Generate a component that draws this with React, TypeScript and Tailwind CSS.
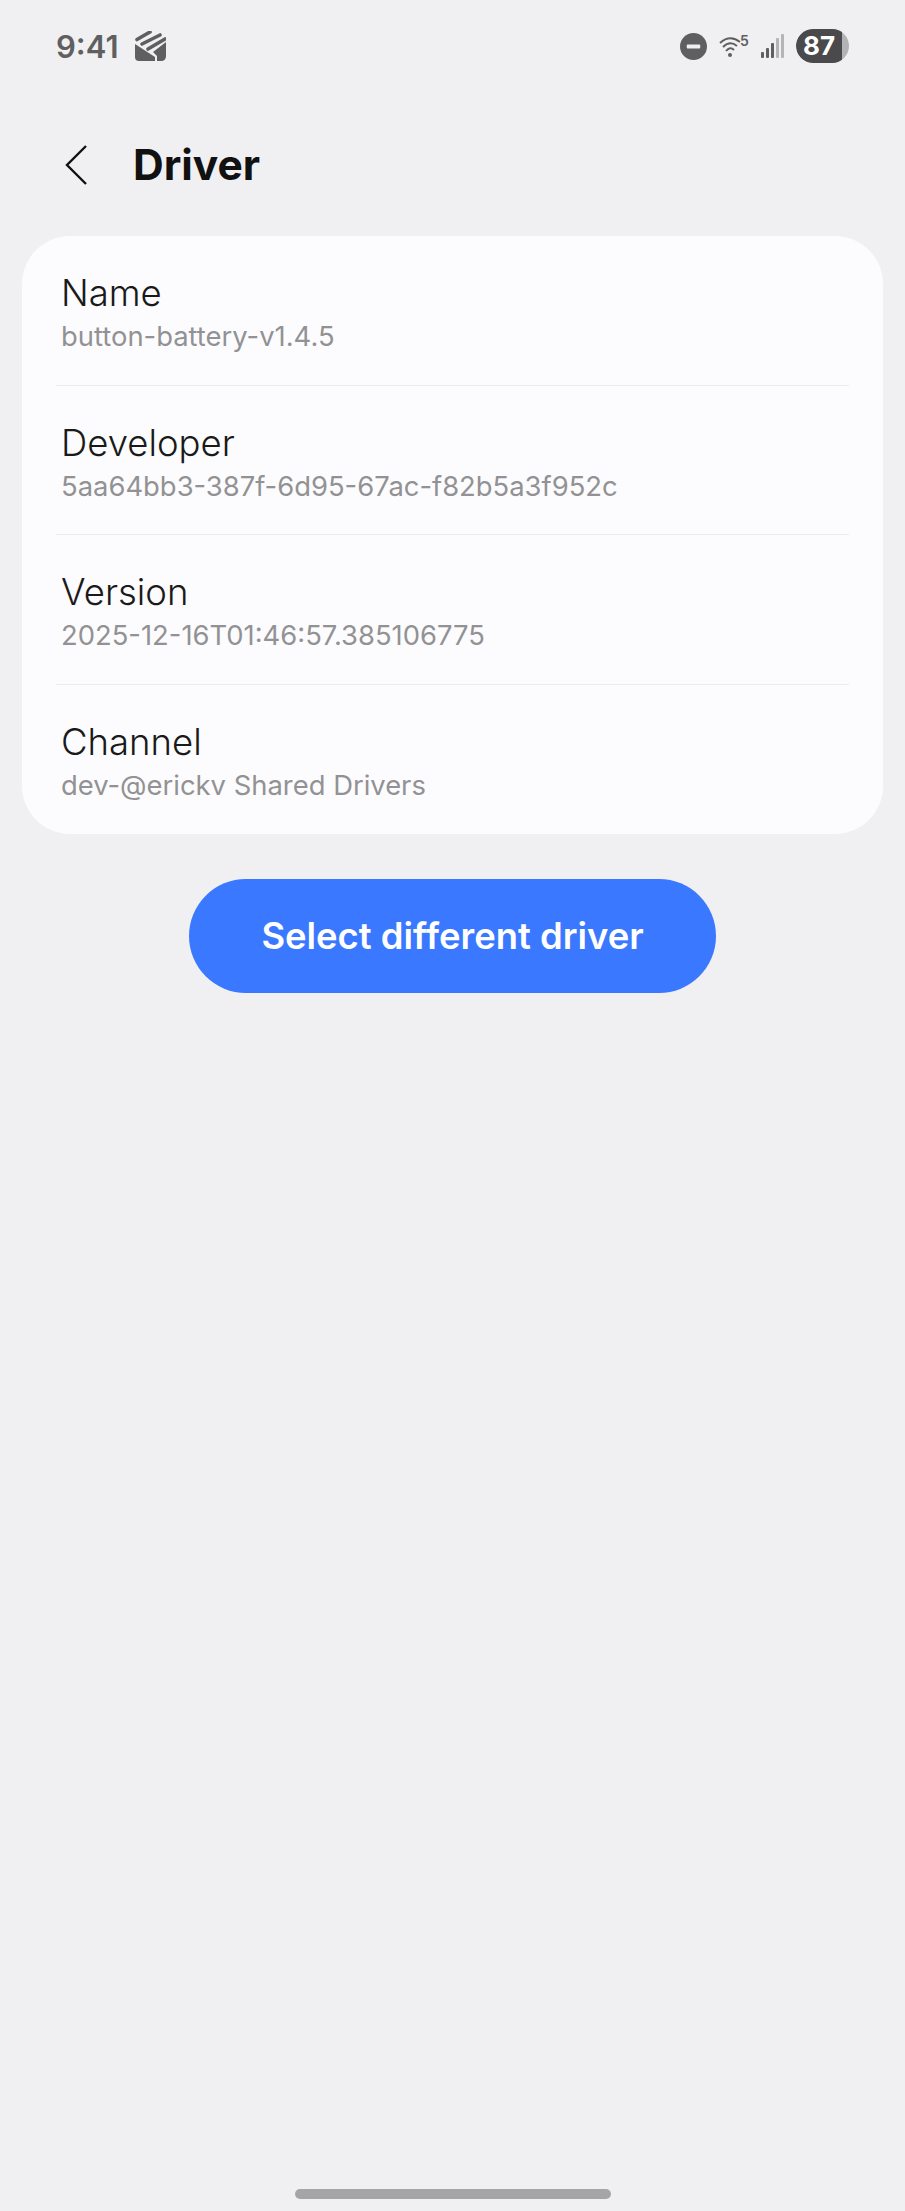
const ROWS = [
  { label: "Name", value: "button-battery-v1.4.5" },
  { label: "Developer", value: "5aa64bb3-387f-6d95-67ac-f82b5a3f952c" },
  { label: "Version", value: "2025-12-16T01:46:57.385106775" },
  { label: "Channel", value: "dev-@erickv Shared Drivers" },
];

function StatusBar() {
  return (
    <div className="flex h-[92px] items-center justify-between pl-[56px] pr-[56px] text-[#5f5f61]">
      <div className="flex items-center gap-[17px]">
        <span className="text-[31px] leading-none font-semibold">9:41</span>
        <svg width="31" height="31" viewBox="0 0 31 31" fill="#5f5f61">
          <path d="M0 13 L20 26 L20 30 L4 30 Q0 30 0 26 Z" />
          <path d="M18 21 L31 11 L31 25 Q31 30 26 30 L22 30 L22 25 Z" />
          <path d="M2 8.5 L15 1 M7 13 L25 4 M13 18 L30 8" stroke="#5f5f61" strokeWidth="3.6" strokeLinecap="round" fill="none" />
        </svg>
      </div>
      <div className="flex items-center">
        <svg width="27" height="27" viewBox="0 0 28 28">
          <circle cx="14" cy="14" r="14" fill="#5f5f61" />
          <rect x="7" y="12" width="14" height="4" rx="1" fill="#f0f0f2" />
        </svg>
        <svg className="ml-[12px]" width="32" height="26" viewBox="0 0 32 26" fill="none" stroke="#5f5f61" strokeWidth="2">
          <path d="M1 10 Q11 1 21 9" />
          <path d="M4 14 Q11 7 18 13" />
          <path d="M7 18 Q11 13 15 17" />
          <circle cx="11" cy="22" r="2" fill="#5f5f61" stroke="none" />
          <text x="21" y="13" fontSize="14" fontWeight="600" fill="#5f5f61" stroke="none" fontFamily="Inter, sans-serif">5</text>
        </svg>
        <svg className="ml-[9px]" width="24" height="26" viewBox="0 0 24 26">
          <rect x="1" y="19" width="3" height="6" rx="1" fill="#5f5f61" />
          <rect x="6" y="15" width="3" height="10" rx="1" fill="#5f5f61" />
          <rect x="11" y="10" width="3" height="15" rx="1" fill="#5f5f61" />
          <rect x="16" y="5" width="3" height="20" rx="1" fill="#b5b5b8" />
          <rect x="21" y="1" width="3" height="24" rx="1" fill="#b5b5b8" />
        </svg>
        <div className="ml-[12px] flex h-[34px] w-[53px] overflow-hidden rounded-full bg-[#b3b3b5]">
          <div className="flex h-full w-[46px] items-center justify-center rounded-l-full bg-[#4a4a4c] text-[26px] leading-none font-bold text-white">
            87
          </div>
        </div>
      </div>
    </div>
  );
}

export default function App() {
  return (
    <div className="flex h-[2211px] flex-col bg-[#f0f0f2] font-['Inter',sans-serif]">
      <StatusBar />

      {/* Header */}
      <div className="flex h-[144px] items-center pt-[2px] pl-[64px]">
        <svg width="24" height="42" viewBox="0 0 24 42" fill="none" stroke="#111" strokeWidth="2.4">
          <path d="M22 2 L3 21 L22 40" />
        </svg>
        <h1 className="ml-[45px] text-[42.5px] leading-none font-bold text-[#111]">Driver</h1>
      </div>

      {/* Info card */}
      <div className="mx-[22px] flex flex-col rounded-[48px] bg-[#fcfcfe] px-[34px]">
        {ROWS.map((row, i) => (
          <div
            key={row.label}
            className={`flex h-[149.5px] flex-col justify-center pt-[6px] pl-[5px] ${i < ROWS.length - 1 ? "border-b border-[#ececee]" : ""}`}
          >
            <div className="text-[36.5px] leading-[42px] font-[350] text-[#1a1a1a]">{row.label}</div>
            <div className="mt-[4px] text-[27.4px] leading-[36px] text-[#929294]">{row.value}</div>
          </div>
        ))}
      </div>

      {/* Action */}
      <button className="mx-auto mt-[45px] h-[114px] w-[527px] rounded-full bg-[#3a78ff] text-[36.4px] font-semibold text-white">
        Select different driver
      </button>

      <div className="mx-auto mt-auto mb-[12px] h-[10px] w-[316px] rounded-full bg-[#a5a5a7]" />
    </div>
  );
}
